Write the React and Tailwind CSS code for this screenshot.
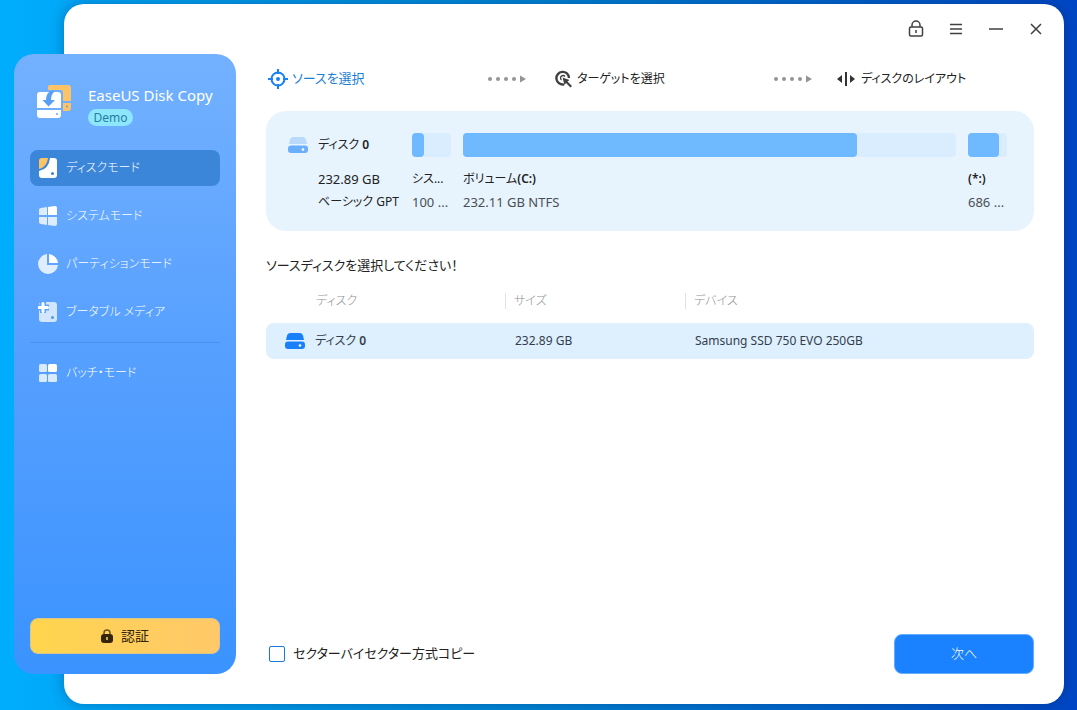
import React, { useState } from 'react';

const menuItems = [
  { id: 'disk', label: 'ディスクモード', icon: DiskModeIcon },
  { id: 'system', label: 'システムモード', icon: SystemIcon },
  { id: 'partition', label: 'パーティションモード', icon: PartitionIcon },
  { id: 'bootable', label: 'ブータブル メディア', icon: BootableIcon },
];

const disks = [{ id: 'disk0', name: 'ディスク', number: '0', size: '232.89 GB', device: 'Samsung SSD 750 EVO 250GB' }];

const volumes = [
  { id: 'system', label: 'シス...', info: '100 ...', used: 31, width: 'w-[39px]' },
  { id: 'c', label: 'ボリューム', letter: '(C:)', info: '232.11 GB NTFS', used: 80, width: 'flex-1' },
  { id: 'recovery', letter: '(*:)', info: '686 ...', used: 80, width: 'w-[39px]' },
];

function LogoIcon() {
  return (
    <svg width="36" height="36" viewBox="0 0 36 36" aria-hidden="true">
      <path d="M14 2h18q3 0 3 3v13h-8V10q0-3-3-3H12V4q0-2 2-2z" fill="#fcc467" />
      <path d="M27 20h8v5q0 3-3 3h-5z" fill="#fcc467" />
      <circle cx="31" cy="23.500" r="1.100" fill="#8f9cae" />
      <path d="M4 9h18q3 0 3 3v13H1V12q0-3 3-3z" fill="#fff" />
      <path d="M19 8q-4 3-4 9h4l-6.500 6.500L6.500 17H10q0-7 5-9z" fill="#5a9ff5" />
      <path d="M1 27h24v5q0 3-3 3H4q-3 0-3-3z" fill="#fff" />
      <circle cx="21" cy="31" r="1.100" fill="#6eaeff" />
    </svg>
  );
}

function DiskModeIcon() {
  return (
    <svg width="20" height="20" viewBox="0 0 20 20" aria-hidden="true">
      <path d="M4 0h6q-1 9-9 11V3q0-3 3-3z" fill="#fcc467" />
      <path d="M12 0h4q3 0 3 3v14q0 3-3 3H4q-3 0-3-3v-4Q11 11 12 0z" fill="#fff" />
      <circle cx="14.500" cy="15.500" r="1.500" fill="#3c86d8" />
    </svg>
  );
}

function SystemIcon() {
  return (
    <svg width="20" height="20" viewBox="0 0 20 20" aria-hidden="true">
      <path d="M3 2l6-1v8H1V4q0-2 2-2z" fill="#fff" fillOpacity=".78" />
      <path d="M10 1l7-1q2 0 2 2v7h-9z" fill="#fff" />
      <path d="M1 11h8v8l-6-1q-2 0-2-2zM10 11h9v7q0 2-2 2l-7-1z" fill="#fff" fillOpacity=".78" />
    </svg>
  );
}

function PartitionIcon() {
  return (
    <svg width="20" height="20" viewBox="0 0 20 20" aria-hidden="true">
      <path d="M9 0v11h11A10 10 0 1 1 9 0z" fill="#fff" fillOpacity=".8" />
      <path d="M11 0a10 10 0 0 1 9 9h-9z" fill="#fff" />
    </svg>
  );
}

function BootableIcon() {
  return (
    <svg width="20" height="20" viewBox="0 0 20 20" aria-hidden="true">
      <rect x="1" y="0" width="18" height="20" rx="3" fill="#d3e6ff" />
      <path d="M5 0v11M0 5.500h11" stroke="#5ba4ff" strokeWidth="6" />
      <path d="M5 1.500v8M1 5.500h8.500" stroke="#fff" strokeWidth="3" strokeLinecap="round" />
      <circle cx="14.500" cy="15.500" r="1.500" fill="#4c99f4" />
    </svg>
  );
}

function BatchIcon() {
  return (
    <svg width="20" height="20" viewBox="0 0 20 20" aria-hidden="true">
      <g fill="#fff" fillOpacity=".78">
        <rect x="1" y="1" width="8" height="8" rx="1.500" />
        <rect x="1" y="11" width="8" height="8" rx="1.500" />
        <rect x="10" y="11" width="9" height="8" rx="1.500" />
      </g>
      <rect x="10" y="1" width="9" height="8" rx="1.500" fill="#fff" />
    </svg>
  );
}

function DriveIcon({ top, base }) {
  return (
    <svg width="20" height="18" viewBox="0 0 20 18" className="shrink-0" aria-hidden="true">
      <path d="M5 1h10q2.500 0 3 2.500L19 8H1l1-4.500Q2.500 1 5 1z" fill={top} />
      <rect x="0" y="9.500" width="20" height="7.500" rx="3" fill={base} />
      <circle cx="15" cy="13.500" r="1.300" fill="#fff" />
    </svg>
  );
}

function SourceIcon() {
  return (
    <svg width="20" height="20" viewBox="0 0 20 20" fill="none" stroke="#1a80f5" strokeWidth="2" aria-hidden="true">
      <circle cx="10" cy="10" r="6.500" />
      <path d="M10 0v5M10 15v5M0 10h5M15 10h5" />
      <circle cx="10" cy="10" r="2" fill="#1a80f5" stroke="none" />
    </svg>
  );
}

function TargetIcon() {
  return (
    <svg width="18" height="18" viewBox="0 0 18 18" fill="none" stroke="#404040" aria-hidden="true">
      <path d="M9 14.300A6.300 6.300 0 1 1 14 8" strokeWidth="2.400" />
      <path d="M6.500 10A2.500 2.500 0 1 1 10 6.500" strokeWidth="1.300" />
      <path d="M7.500 7.500l7 2.500-2 1.500 4.500 4.500-1.500 1.500-4.500-4.500-1.500 2z" fill="#404040" stroke="none" />
    </svg>
  );
}

function LayoutIcon() {
  return (
    <svg width="18" height="16" viewBox="0 0 18 16" fill="#333" aria-hidden="true">
      <rect x="8" y="1" width="2" height="14" />
      <path d="M0 8l5-4v8zM18 8l-5-4v8z" />
    </svg>
  );
}

function StepArrow() {
  return (
    <svg width="40" height="10" viewBox="0 0 40 10" fill="#949494" aria-hidden="true">
      <circle cx="3" cy="5" r="2" />
      <circle cx="11" cy="5" r="2" />
      <circle cx="19" cy="5" r="2" />
      <circle cx="27" cy="5" r="2" />
      <path d="M33 1.500l6 3.500-6 3.500z" />
    </svg>
  );
}

function Sidebar() {
  const [active, setActive] = useState('disk');

  const renderItem = ({ id, label, icon: Icon }) => (
    <button
      key={id}
      type="button"
      onClick={() => setActive(id)}
      className={`flex h-9 w-full items-center gap-2 rounded-lg px-2 text-xs font-light text-white ${
        active === id ? 'bg-[#3c86d9]' : 'hover:bg-white/10'
      }`}
    >
      <Icon />
      {label}
    </button>
  );

  return (
    <aside className="z-10 mt-[50px] mb-[30px] -mr-[172px] flex w-[222px] shrink-0 flex-col rounded-[20px] bg-linear-to-b from-[#73b1ff] via-[#559fff] to-[#3a93ff] px-4 pb-5">
      <div className="flex items-start gap-4 px-1.5 pt-[29px] pb-6">
        <LogoIcon />
        <div>
          <h1 className="text-[15px] leading-6 whitespace-nowrap text-white">EaseUS Disk Copy</h1>
          <span className="mt-0.5 block w-[45px] rounded-full bg-[#8ee6fb] text-center text-xs leading-[17px] text-[#237f9f]">
            Demo
          </span>
        </div>
      </div>
      <nav className="flex flex-col gap-3">
        {menuItems.map(renderItem)}
        <hr className="border-[#4b92ea]" />
        {renderItem({ id: 'batch', label: 'バッチ・モード', icon: BatchIcon })}
      </nav>
      <button
        type="button"
        className="mt-auto flex h-9 items-center justify-center gap-2 rounded-lg border border-[#d9c68c] bg-linear-to-r from-[#ffd54d] to-[#ffc869] text-sm text-[#33240c]"
      >
        <svg width="12" height="14" viewBox="0 0 12 14" aria-hidden="true">
          <path d="M3 5V4a3 3 0 0 1 6 0v1" fill="none" stroke="#6b5323" strokeWidth="1.500" />
          <rect y="5" width="12" height="9" rx="3" fill="#33240c" />
          <rect x="5" y="8" width="2" height="3" fill="#c9a757" />
        </svg>
        認証
      </button>
    </aside>
  );
}

function TitleBar() {
  return (
    <div className="flex justify-end gap-5 text-[#404040]">
      <button type="button" aria-label="ロック" className="flex size-5 items-center justify-center">
        <svg width="16" height="18" viewBox="0 0 16 18" fill="none" stroke="currentColor" strokeWidth="1.500" aria-hidden="true">
          <rect x="1.500" y="7" width="13" height="9" rx="1.500" />
          <path d="M4 7V5a4 4 0 0 1 8 0v2M8 10v3" />
        </svg>
      </button>
      <button type="button" aria-label="メニュー" className="flex size-5 items-center justify-center">
        <svg width="12" height="12" viewBox="0 0 12 12" stroke="currentColor" strokeWidth="1.500" aria-hidden="true">
          <path d="M0 1.500h12M0 6h12M0 10.500h12" />
        </svg>
      </button>
      <button type="button" aria-label="最小化" className="flex size-5 items-center justify-center">
        <svg width="14" height="12" viewBox="0 0 14 12" stroke="currentColor" strokeWidth="1.500" aria-hidden="true">
          <path d="M0 6h14" />
        </svg>
      </button>
      <button type="button" aria-label="閉じる" className="flex size-5 items-center justify-center">
        <svg width="12" height="12" viewBox="0 0 12 12" stroke="currentColor" strokeWidth="1.500" aria-hidden="true">
          <path d="M1 1l10 10M11 1L1 11" />
        </svg>
      </button>
    </div>
  );
}

function Steps() {
  return (
    <ol className="mt-[30px] grid h-5 grid-cols-[287fr_282fr_197fr] items-center pl-0.5 text-xs whitespace-nowrap text-[#222]">
      <li className="flex items-center gap-1 pr-7 text-[13px] text-[#1a80d8]">
        <SourceIcon />
        <span className="flex-1">ソースを選択</span>
        <StepArrow />
      </li>
      <li className="flex items-center gap-1 pr-6">
        <TargetIcon />
        <span className="flex-1">ターゲットを選択</span>
        <StepArrow />
      </li>
      <li className="flex items-center gap-1.5">
        <LayoutIcon />
        ディスクのレイアウト
      </li>
    </ol>
  );
}

function DiskMap() {
  return (
    <section className="mt-[22px] flex h-[120px] rounded-[20px] bg-[#e7f4fe] pt-[22px] pr-[27px] pl-[22px] text-[13px] text-[#222]">
      <div className="flex w-[124px] shrink-0 gap-2.5">
        <div className="flex h-6 items-center">
          <DriveIcon top="#b9dafb" base="#6aaefc" />
        </div>
        <div className="whitespace-nowrap">
          <p className="h-6 text-xs leading-6">
            ディスク <b className="font-semibold">0</b>
          </p>
          <p className="mt-2.5 leading-6">232.89 GB</p>
          <p className="text-xs leading-[22px]">ベーシック GPT</p>
        </div>
      </div>
      <div className="flex min-w-0 flex-1 gap-3">
        {volumes.map((volume) => (
          <div key={volume.id} className={`${volume.width} whitespace-nowrap`}>
            <div className="h-6 rounded bg-[#d9edfe]">
              <div className="h-6 rounded bg-[#6eb9ff]" style={{ width: `${volume.used}%` }} />
            </div>
            <p className="mt-2.5 text-xs leading-6">
              {volume.label}
              {volume.letter && <b className="font-semibold">{volume.letter}</b>}
            </p>
            <p className="leading-[22px] text-[#4a4f55]">{volume.info}</p>
          </div>
        ))}
      </div>
    </section>
  );
}

function DiskTable() {
  const [selected, setSelected] = useState('disk0');

  return (
    <table className="mt-0.5 w-full table-fixed border-separate border-spacing-0 text-left text-xs text-[#333e4d]">
      <thead>
        <tr className="h-11 text-[#909090]">
          <th className="w-[239px] pl-[50px] font-light">ディスク</th>
          <th className="w-[180px] font-light">
            <span className="block border-l border-[#e2e2e2] pl-2 leading-4">サイズ</span>
          </th>
          <th className="font-light">
            <span className="block border-l border-[#e2e2e2] pl-2 leading-4">デバイス</span>
          </th>
        </tr>
      </thead>
      <tbody>
        {disks.map((disk) => (
          <tr
            key={disk.id}
            onClick={() => setSelected(disk.id)}
            className={`h-9 ${selected === disk.id ? 'bg-[#deeffe]' : ''}`}
          >
            <td className="rounded-l-lg pl-[19px]">
              <span className="flex items-center gap-2.5">
                <DriveIcon top="#1a80fa" base="#1a80fa" />
                <span>
                  {disk.name} <b className="font-semibold">{disk.number}</b>
                </span>
              </span>
            </td>
            <td className="pl-2.5">{disk.size}</td>
            <td className="rounded-r-lg pl-2.5">{disk.device}</td>
          </tr>
        ))}
      </tbody>
    </table>
  );
}

export default function App() {
  const [sectorCopy, setSectorCopy] = useState(false);

  return (
    <div className="flex min-h-screen bg-linear-to-r from-[#00adfd] via-[#0084d4] to-[#0046c4] pt-1 pr-[13px] pb-1.5 pl-3.5 font-['Noto_Sans','Noto_Sans_CJK_JP',sans-serif] [font-feature-settings:'palt']">
      <Sidebar />
      <main className="flex min-w-0 flex-1 flex-col rounded-[20px] bg-white pt-[15px] pr-[30px] pb-[30px] pl-[202px] shadow-[0_0_14px_rgba(0,30,80,0.35)]">
        <div className="-mr-3">
          <TitleBar />
        </div>
        <Steps />
        <DiskMap />
        <h2 className="mt-[22px] text-[13px] leading-6 text-[#222]">ソースディスクを選択してください！</h2>
        <DiskTable />
        <div className="mt-auto flex items-center justify-between pl-[3px]">
          <label className="flex items-center gap-2 text-[13px] text-[#222]">
            <input
              type="checkbox"
              checked={sectorCopy}
              onChange={(e) => setSectorCopy(e.target.checked)}
              className="size-4 appearance-none rounded-xs border border-[#1a78d8] bg-white checked:bg-[#1a80fa]"
            />
            セクターバイセクター方式コピー
          </label>
          <button
            type="button"
            className="h-10 w-[140px] rounded-lg border border-[#66aefc] bg-[#1a82ff] text-[13px] font-light text-white"
          >
            次へ
          </button>
        </div>
      </main>
    </div>
  );
}
